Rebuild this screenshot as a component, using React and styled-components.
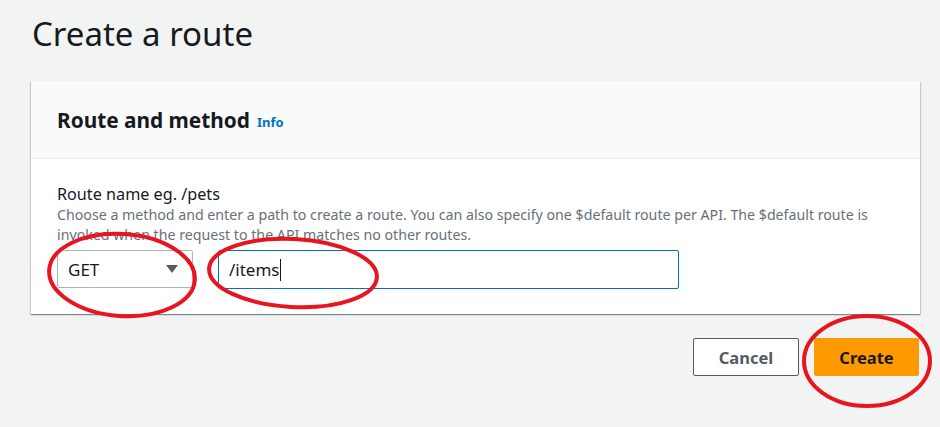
import React from 'react';
import styled, { createGlobalStyle } from 'styled-components';

const GlobalStyle = createGlobalStyle`
  html, body {
    margin: 0;
    padding: 0;
    background: #f2f3f3;
  }
  body {
    font-family: 'Noto Sans', 'Open Sans', sans-serif;
    color: #16191f;
  }
`;

const Page = styled.div`
  position: relative;
  width: 940px;
  height: 427px;
  box-sizing: border-box;
  padding: 10px 20px 0 31px;
  overflow: hidden;
`;

const Title = styled.h1`
  margin: 0 0 0 1px;
  font-size: 33px;
  font-weight: 400;
  line-height: 48px;
  color: #16191f;
`;

const Card = styled.div`
  margin-top: 23px;
  background: #fff;
  box-shadow: 0 1px 1px 0 rgba(0, 28, 36, 0.3), 1px 1px 1px 0 rgba(0, 28, 36, 0.15),
    -1px 1px 1px 0 rgba(0, 28, 36, 0.15);
`;

const CardHeader = styled.div`
  height: 78px;
  box-sizing: border-box;
  padding: 0 26px;
  display: flex;
  align-items: center;
  gap: 7px;
  background: #fafafa;
  border-bottom: 1px solid #eaeded;
`;

const CardTitle = styled.h2`
  margin: 0;
  font-size: 20.8px;
  font-weight: 700;
  color: #16191f;
`;

const InfoLink = styled.a`
  font-size: 13px;
  font-weight: 700;
  color: #0073bb;
  margin-top: 4px;
`;

const CardBody = styled.div`
  padding: 24px 26px 25px;
`;

const Label = styled.div`
  font-size: 16.2px;
  line-height: 22px;
  color: #16191f;
`;

const Description = styled.div`
  font-size: 14.2px;
  line-height: 20px;
  color: #687078;
`;

const Row = styled.div`
  margin-top: 5px;
  display: flex;
  gap: 25px;
`;

const Select = styled.div`
  width: 136px;
  height: 38px;
  box-sizing: border-box;
  border: 1px solid #aab7b8;
  border-radius: 2px;
  padding: 0 14px 0 10px;
  display: flex;
  align-items: center;
  justify-content: space-between;
  font-size: 17px;
  color: #16191f;
`;

const Caret = styled.span`
  width: 0;
  height: 0;
  border-left: 6px solid transparent;
  border-right: 6px solid transparent;
  border-top: 8px solid #545b64;
`;

const Input = styled.div`
  width: 461px;
  height: 39px;
  box-sizing: border-box;
  border: 1.5px solid #0073bb;
  border-radius: 2px;
  padding: 0 10px;
  display: flex;
  align-items: center;
  font-size: 17px;
  color: #16191f;
`;

const Cursor = styled.span`
  display: inline-block;
  width: 1px;
  height: 22px;
  background: #16191f;
  margin-left: 1px;
`;

const Actions = styled.div`
  margin-top: 24px;
  display: flex;
  justify-content: flex-end;
  gap: 15px;
  padding-right: 1px;
`;

const Button = styled.button`
  width: ${p => p.$w}px;
  height: 38px;
  box-sizing: border-box;
  border-radius: 2px;
  font-family: 'Noto Sans', 'Open Sans', sans-serif;
  font-size: 16.5px;
  font-weight: 700;
  cursor: pointer;
  border: 1px solid ${p => (p.$primary ? '#ff9900' : '#545b64')};
  background: ${p => (p.$primary ? '#ff9900' : '#fff')};
  color: ${p => (p.$primary ? '#16191f' : '#545b64')};
`;

const Marks = styled.svg`
  position: absolute;
  left: 0;
  top: 0;
  pointer-events: none;
`;

export default function App() {
  return (
    <Page>
      <GlobalStyle />
      <Title>Create a route</Title>
      <Card>
        <CardHeader>
          <CardTitle>Route and method</CardTitle>
          <InfoLink>Info</InfoLink>
        </CardHeader>
        <CardBody>
          <Label>Route name eg. /pets</Label>
          <Description>
            Choose a method and enter a path to create a route. You can also specify one $default
            route per API. The $default route is invoked when the request to the API matches no
            other routes.
          </Description>
          <Row>
            <Select>
              GET
              <Caret />
            </Select>
            <Input>
              /items
              <Cursor />
            </Input>
          </Row>
        </CardBody>
      </Card>
      <Actions>
        <Button $w={106}>Cancel</Button>
        <Button $w={105} $primary>
          Create
        </Button>
      </Actions>
      <Marks width="940" height="427" viewBox="0 0 940 427">
        <g fill="none" stroke="#e8141f" strokeWidth="4">
          <ellipse cx="122" cy="275" rx="73" ry="41" transform="rotate(4 122 275)" />
          <ellipse cx="293" cy="273" rx="84" ry="34" transform="rotate(3 293 273)" />
          <ellipse cx="867" cy="361" rx="63" ry="45" />
        </g>
      </Marks>
    </Page>
  );
}
